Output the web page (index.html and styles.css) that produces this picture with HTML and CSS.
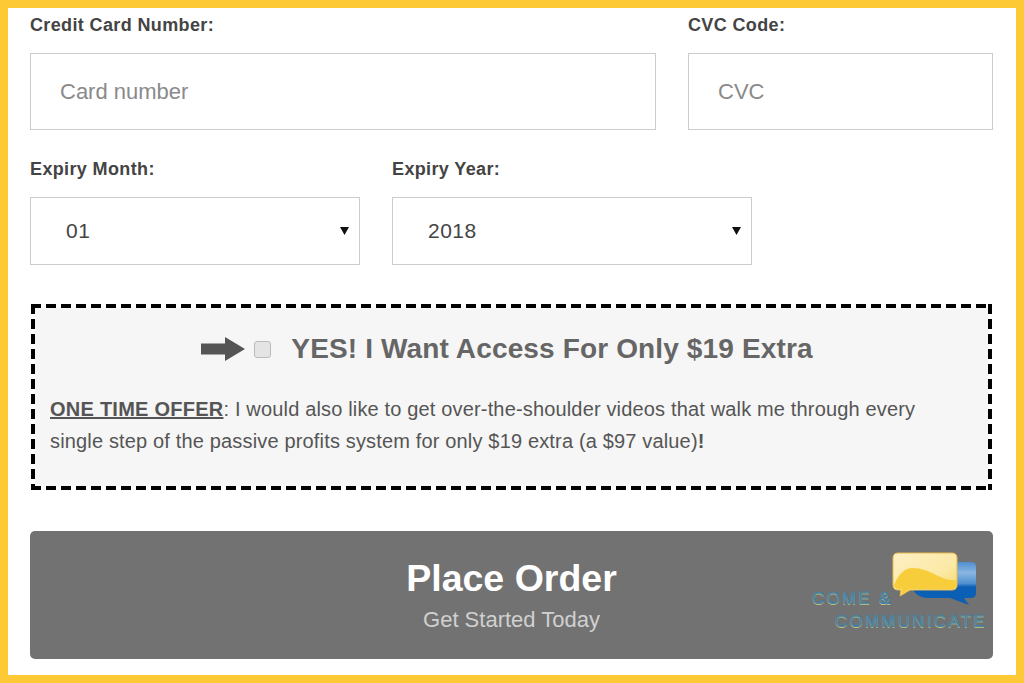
FILE: index.html
```html
<!DOCTYPE html>
<html lang="en">
<head>
<meta charset="utf-8">
<title>Checkout</title>
<link rel="stylesheet" href="styles.css">
</head>
<body>
<main class="frame">
  <section class="row row-card">
    <div class="field">
      <label class="label" for="card">Credit Card Number:</label>
      <input class="input" id="card" type="text" placeholder="Card number">
    </div>
    <div class="field">
      <label class="label" for="cvc">CVC Code:</label>
      <input class="input" id="cvc" type="text" placeholder="CVC">
    </div>
  </section>
  <section class="row row-expiry">
    <div class="field">
      <label class="label" for="month">Expiry Month:</label>
      <div class="select-wrap">
        <select class="select" id="month"><option>01</option></select>
        <svg class="caret" width="9" height="9" viewBox="0 0 9 9"><path d="M0 1h9L4.500 9z"/></svg>
      </div>
    </div>
    <div class="field">
      <label class="label" for="year">Expiry Year:</label>
      <div class="select-wrap">
        <select class="select" id="year"><option>2018</option></select>
        <svg class="caret" width="9" height="9" viewBox="0 0 9 9"><path d="M0 1h9L4.500 9z"/></svg>
      </div>
    </div>
  </section>
  <section class="offer">
    <div class="offer-head">
      <svg class="arrow" width="44" height="24" viewBox="0 0 44 24"><path d="M0 6.500h24V0l20 12-20 12v-6.500H0z"/></svg>
      <input class="check" type="checkbox" id="upsell">
      <label class="offer-title" for="upsell">YES! I Want Access For Only $19 Extra</label>
    </div>
    <p class="offer-text"><strong class="once">ONE TIME OFFER</strong>: I would also like to get over-the-shoulder videos that walk me through every single step of the passive profits system for only $19 extra (a $97 value)<strong>!</strong></p>
  </section>
  <button class="order" type="button">
    <span class="order-main">Place Order</span>
    <span class="order-sub">Get Started Today</span>
    <span class="logo">
      <svg class="bubbles" width="86" height="54" viewBox="0 0 86 54">
        <defs>
          <linearGradient id="blueFill" x1="0" y1="0" x2="0" y2="1">
            <stop offset="0" stop-color="#4f8fd0"/><stop offset="0.25" stop-color="#8ab6e2"/><stop offset="0.5" stop-color="#4f8fcf"/><stop offset="0.58" stop-color="#0b5fb4"/><stop offset="1" stop-color="#0b5fb4"/>
          </linearGradient>
          <linearGradient id="paleFill" x1="0" y1="0" x2="1" y2="1">
            <stop offset="0" stop-color="#fdf0c4"/><stop offset="0.6" stop-color="#fbe9a6"/><stop offset="1" stop-color="#f7d65e"/>
          </linearGradient>
        </defs>
        <path fill="url(#blueFill)" d="M56 10h23q5 0 5 5v26q0 5-5 5h-7l5 7-19-7H36q-10 0-15-8z"/>
        <path fill="url(#paleFill)" stroke="#e6b94a" d="M6 1h54q5 0 5 5v27q0 5-5 5H18L8 44l1-6H6q-5 0-5-5V6q0-5 5-5z"/>
        <path fill="#f8cd3c" d="M2 33C6 23 12 16 21 16c18 0 28 14 43 12v5q0 4-4 4H18L9 43l1-6H6q-4-1-4-4z"/>
      </svg>
      <span class="logo-line1">COME &amp;</span>
      <span class="logo-line2">COMMUNICATE</span>
    </span>
  </button>
</main>
</body>
</html>
```
FILE: styles.css
```css
* { box-sizing: border-box; }
html, body { margin: 0; padding: 0; background: #fff; }
.frame {
  width: 1024px;
  height: 683px;
  border: 8px solid #fdca36;
  padding: 4px 23px 0 22px;
  overflow: hidden;
  font-family: "Liberation Sans", Arial, sans-serif;
  color: #444;
  background: #fff;
}
.row { display: grid; column-gap: 32px; }
.row-card { grid-template-columns: 626px 305px; }
.row-expiry { grid-template-columns: 330px 360px; margin-top: 26px; }
.field { display: flex; flex-direction: column; }
.label { font-size: 18px; line-height: 24px; padding-top: 1px; font-weight: 700; letter-spacing: 0.37px; color: #444; }
.row-card .label { margin-bottom: 16px; }
.row-expiry .label { margin-bottom: 16px; }
.input {
  height: 77px;
  width: 100%;
  border: 1px solid #ccc;
  padding: 0 29px;
  font: 22px "Liberation Sans", Arial, sans-serif;
  color: #444;
  background: #fff;
  border-radius: 0;
  outline: none;
}
.input::placeholder { color: #8a8a8a; opacity: 1; }
.select-wrap { position: relative; }
.select {
  display: block;
  appearance: none;
  width: 100%;
  height: 68px;
  border: 1px solid #ccc;
  border-radius: 0;
  padding: 0 35px 2px;
  background: #fff;
  font: 21px "Liberation Sans", Arial, sans-serif;
  color: #444;
  letter-spacing: 0.5px;
}
.caret { position: absolute; right: 11px; top: 29px; fill: #111; }
.offer {
  height: 186px;
  margin: 39px 1px 0;
  padding: 4px 60px 4px 19px;
  background:
    linear-gradient(90deg, #000 10px, transparent 10px) 0 0 / 15px 4px repeat-x,
    linear-gradient(90deg, #000 10px, transparent 10px) 0 100% / 15px 4px repeat-x,
    linear-gradient(#000 10px, transparent 10px) 0 0 / 4px 15px repeat-y,
    linear-gradient(#000 10px, transparent 10px) 100% 0 / 4px 15px repeat-y,
    linear-gradient(#f6f6f6, #f6f6f6) center / calc(100% - 8px) calc(100% - 8px) no-repeat;
}
.offer-head { display: flex; align-items: center; justify-content: center; height: 82px; margin-right: -40px; padding-right: 8px; }
.arrow { fill: #555; }
.check {
  appearance: none;
  width: 17px;
  height: 17px;
  margin: 0 0 0 9px;
  border: 1px solid #bbb;
  border-radius: 3px;
  background: #e4e4e4;
}
.offer-title { margin-left: 20px; font-size: 28px; font-weight: 700; letter-spacing: 0.14px; color: #666; }
.offer-text { margin: 3px 0 0; font-size: 20px; line-height: 32px; letter-spacing: 0.16px; color: #555; }
.once { color: #555; text-decoration: underline; letter-spacing: 0.25px; }
.order {
  position: relative;
  display: flex;
  flex-direction: column;
  align-items: center;
  width: 963px;
  height: 128px;
  margin-top: 41px;
  padding: 25px 0 0;
  border: 0;
  border-radius: 5px;
  background: #727272;
  color: #fff;
  font-family: "Liberation Sans", Arial, sans-serif;
}
.order-main { font-size: 37.500px; line-height: 44px; font-weight: 700; }
.order-sub { font-size: 22px; line-height: 28px; margin-top: 6px; color: #d0d0d0; }
.logo { position: absolute; left: 780px; top: 20px; width: 180px; height: 82px; }
.bubbles { position: absolute; left: 82px; top: 1px; }
.logo-line1, .logo-line2 {
  position: absolute;
  font-size: 17px;
  line-height: 20px;
  letter-spacing: 2.25px;
  color: #7a8268;
  -webkit-text-stroke: 0.55px #1a82d0;
  white-space: nowrap;
  font-weight: 400;
  text-shadow: 0 1px 0 #d8d070;
}
.logo-line1 { left: 2px; top: 38px; }
.logo-line2 { left: 25px; top: 61px; }
```
